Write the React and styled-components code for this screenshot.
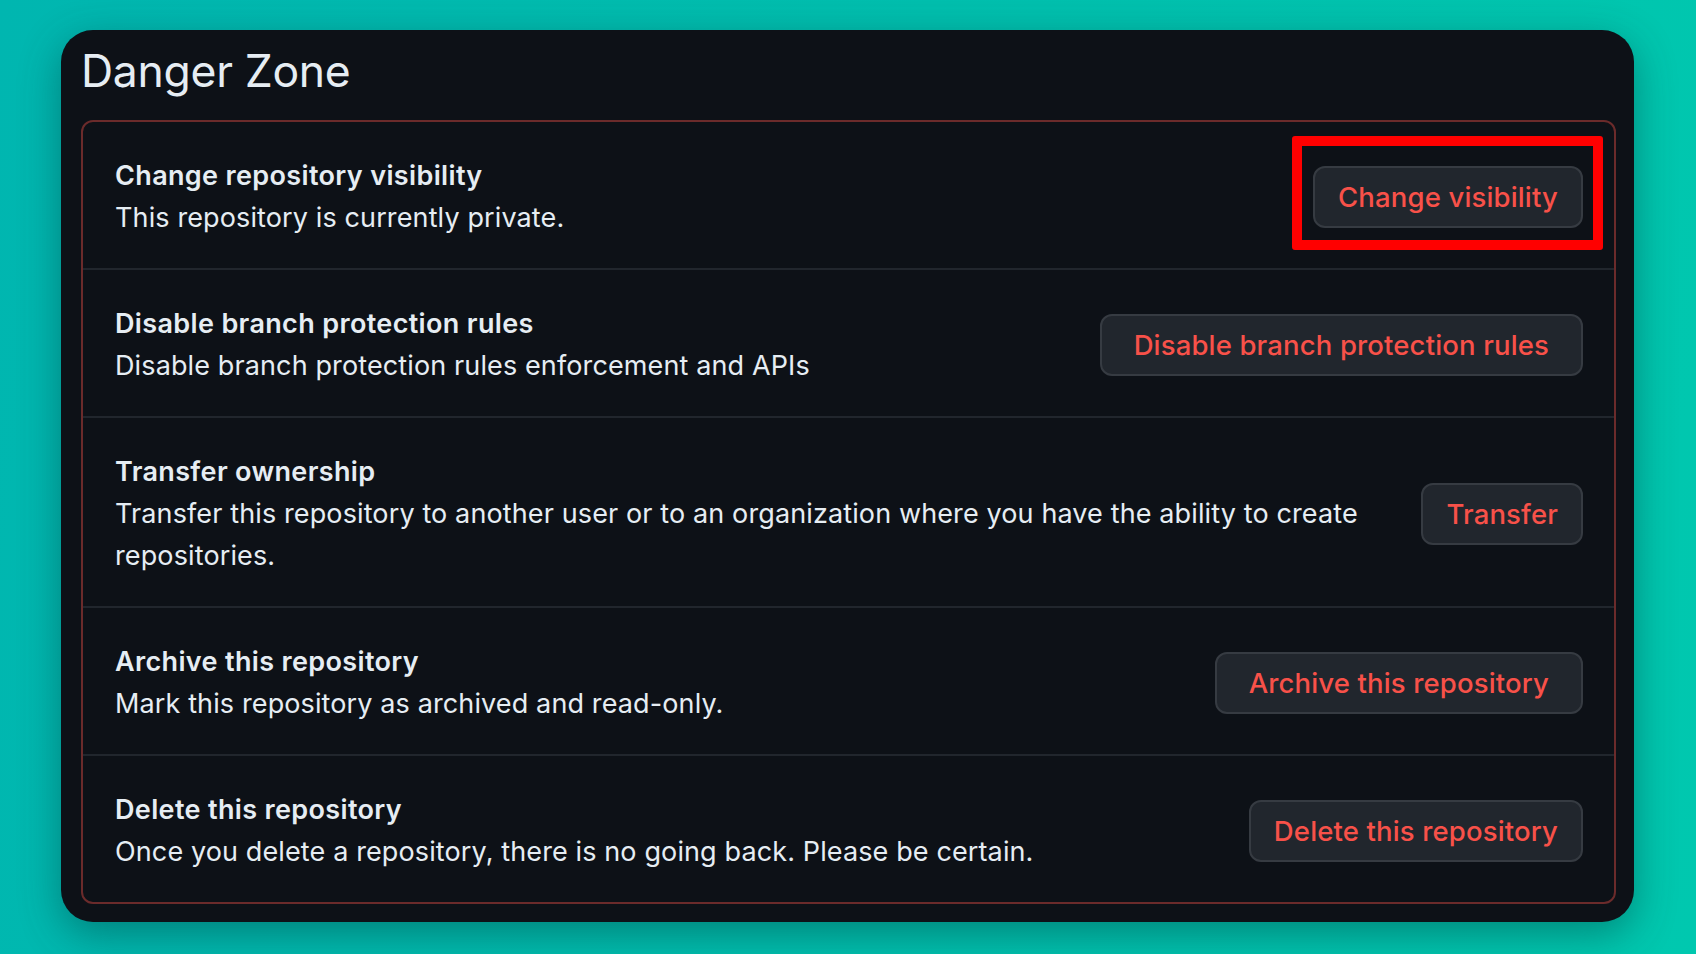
import styled, { createGlobalStyle } from "styled-components";

const GlobalStyle = createGlobalStyle`
  html, body {
    margin: 0;
    padding: 0;
  }
  body {
    width: 1696px;
    height: 954px;
    overflow: hidden;
    background: linear-gradient(100deg, #00b6b0 0%, #00bfae 50%, #00c8af 100%);
    font-family: Inter, "Noto Sans", "Liberation Sans", sans-serif;
    -webkit-font-smoothing: antialiased;
  }
`;

const Page = styled.div`
  padding: 30px 62px 0 61px;
`;

const Card = styled.section`
  background: #0d1117;
  border-radius: 32px;
  padding: 0 18px 18px 20px;
  box-shadow: 0 12px 40px rgba(0, 60, 60, 0.45);
`;

const Heading = styled.h2`
  margin: 0;
  padding: 10px 0 18px 0;
  font-size: 44.5px;
  line-height: 62px;
  font-weight: 400;
  color: #e6edf3;
  letter-spacing: -0.3px;
`;

const DangerBox = styled.div`
  border: 2px solid #6b2b2b;
  border-radius: 12px;
`;

const Row = styled.div`
  display: flex;
  align-items: center;
  justify-content: space-between;
  gap: 32px;
  padding: 33px 31px 29px 32px;
  border-top: ${(p) => (p.first ? "none" : "2px solid #21262d")};
`;

const Info = styled.div`
  flex: 1;
  min-width: 0;
  color: #e6edf3;
  font-size: 27px;
  line-height: 42px;
  letter-spacing: 0.12px;
`;

const Title = styled.div`
  font-weight: 600;
  letter-spacing: 0.35px;
`;

const ButtonWrap = styled.span`
  position: relative;
  flex-shrink: 0;
  display: inline-flex;
`;

const DangerButton = styled.button`
  height: 62px;
  padding: 0 ${(p) => (p.wide ? 32 : 23)}px;
  border: 2px solid #363b42;
  border-radius: 12px;
  background: #21262d;
  color: #f85149;
  font-family: inherit;
  font-size: 27.5px;
  font-weight: 500;
  letter-spacing: 0.15px;
  white-space: nowrap;
  cursor: pointer;
`;

const Highlight = styled.span`
  position: absolute;
  top: -30px;
  bottom: -22px;
  left: -21px;
  right: -20px;
  border: 10px solid #ff0000;
  border-radius: 3px;
  pointer-events: none;
`;

const rows = [
  {
    title: "Change repository visibility",
    text: "This repository is currently private.",
    action: "Change visibility",
    marked: true,
  },
  {
    title: "Disable branch protection rules",
    text: "Disable branch protection rules enforcement and APIs",
    action: "Disable branch protection rules",
    wide: true,
  },
  {
    title: "Transfer ownership",
    text: "Transfer this repository to another user or to an organization where you have the ability to create repositories.",
    action: "Transfer",
  },
  {
    title: "Archive this repository",
    text: "Mark this repository as archived and read-only.",
    action: "Archive this repository",
    wide: true,
  },
  {
    title: "Delete this repository",
    text: "Once you delete a repository, there is no going back. Please be certain.",
    action: "Delete this repository",
  },
];

export default function App() {
  return (
    <>
      <GlobalStyle />
      <Page>
        <Card>
          <Heading>Danger Zone</Heading>
          <DangerBox>
            {rows.map((row, i) => (
              <Row key={row.title} first={i === 0}>
                <Info>
                  <Title>{row.title}</Title>
                  <div>{row.text}</div>
                </Info>
                <ButtonWrap>
                  <DangerButton type="button" wide={row.wide}>
                    {row.action}
                  </DangerButton>
                  {row.marked && <Highlight />}
                </ButtonWrap>
              </Row>
            ))}
          </DangerBox>
        </Card>
      </Page>
    </>
  );
}
